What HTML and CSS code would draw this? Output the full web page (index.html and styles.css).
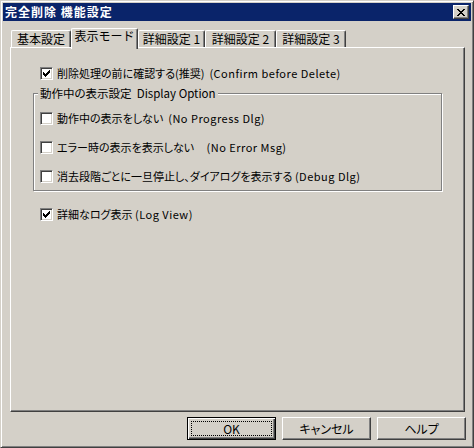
FILE: index.html
```html
<!DOCTYPE html>
<html lang="ja">
<head>
<meta charset="utf-8">
<title>完全削除 機能設定</title>
<link rel="stylesheet" href="styles.css">
</head>
<body>
<div class="window">
  <div class="titlebar">
    <span class="title">完全削除 機能設定</span>
    <span class="close"><svg width="8" height="7" viewBox="0 0 8 7" shape-rendering="crispEdges"><path d="M0 0h2v1h-2z M6 0h2v1h-2z M1 1h2v1h-2z M5 1h2v1h-2z M2 2h4v1h-4z M3 3h2v1h-2z M2 4h4v1h-4z M1 5h2v1h-2z M5 5h2v1h-2z M0 6h2v1h-2z M6 6h2v1h-2z" fill="#000"/></svg></span>
  </div>
  <div class="tabs">
    <div class="tab t1">基本設定</div>
    <div class="tab t2 selected">表示モード</div>
    <div class="tab t3">詳細設定 1</div>
    <div class="tab t4">詳細設定 2</div>
    <div class="tab t5">詳細設定 3</div>
  </div>
  <div class="panel">
    <div class="row first">
      <span class="cb checked"><svg width="7" height="7" viewBox="0 0 7 7" shape-rendering="crispEdges"><path d="M0 2h1v3h-1z M1 3h1v3h-1z M2 4h1v3h-1z M3 3h1v3h-1z M4 2h1v3h-1z M5 1h1v3h-1z M6 0h1v3h-1z" fill="#000"/></svg></span>
      <span class="label">削除処理の前に確認する(推奨)&nbsp;&nbsp;<span class="en">(Confirm before Delete)</span></span>
    </div>
    <div class="group">
      <div class="group-label">動作中の表示設定&nbsp;&nbsp;Display Option</div>
      <div class="row g1">
        <span class="cb"></span>
        <span class="label">動作中の表示をしない&nbsp;&nbsp;<span class="en">(No Progress Dlg)</span></span>
      </div>
      <div class="row g2">
        <span class="cb"></span>
        <span class="label">エラー時の表示を表示しない&nbsp;&nbsp;&nbsp;&nbsp;&nbsp;<span class="en">(No Error Msg)</span></span>
      </div>
      <div class="row g2">
        <span class="cb"></span>
        <span class="label">消去段階ごとに一旦停止し、ダイアログを表示する <span class="en">(Debug Dlg)</span></span>
      </div>
    </div>
    <div class="row last">
      <span class="cb checked"><svg width="7" height="7" viewBox="0 0 7 7" shape-rendering="crispEdges"><path d="M0 2h1v3h-1z M1 3h1v3h-1z M2 4h1v3h-1z M3 3h1v3h-1z M4 2h1v3h-1z M5 1h1v3h-1z M6 0h1v3h-1z" fill="#000"/></svg></span>
      <span class="label">詳細なログ表示 <span class="en">(Log View)</span></span>
    </div>
  </div>
  <div class="buttons">
    <div class="btn default"><span class="focus">OK</span></div>
    <div class="btn">キャンセル</div>
    <div class="btn">ヘルプ</div>
  </div>
</div>
</body>
</html>
```
FILE: styles.css
```css
* { box-sizing: border-box; }
html, body { margin: 0; padding: 0; }
body {
  width: 474px;
  height: 448px;
  background: #d4d0c8;
  font-family: "Noto Sans CJK JP", "Noto Sans", sans-serif;
  font-size: 12px;
  font-feature-settings: "palt";
  color: #000;
  overflow: hidden;
}
.window {
  width: 474px;
  height: 448px;
  background: #d4d0c8;
  border: 1px solid;
  border-color: #d4d0c8 #404040 #404040 #d4d0c8;
  box-shadow: inset 1px 1px #fff, inset -1px -1px #808080;
  padding: 2px;
  display: flex;
  flex-direction: column;
}
.titlebar {
  height: 18px;
  flex: none;
  background: #0a246a;
  color: #fff;
  display: flex;
  align-items: center;
  justify-content: space-between;
  padding: 0 2px 0 2px;
}
.title {
  font-weight: bold;
  font-size: 12px;
  line-height: 18px;
  letter-spacing: 1px;
  font-feature-settings: normal;
}
.close {
  width: 16px;
  height: 14px;
  background: #d4d0c8;
  border: 1px solid;
  border-color: #fff #404040 #404040 #fff;
  box-shadow: inset -1px -1px #808080;
  display: flex;
  align-items: center;
  justify-content: center;
  padding-right: 1px;
}
.close svg { display: block; }
.tabs {
  margin-top: 7px;
  height: 19px;
  flex: none;
  display: flex;
  align-items: flex-end;
  padding-left: 8px;
}
.tab {
  height: 17px;
  border-top: 1px solid #fff;
  border-left: 1px solid #fff;
  border-right: 1px solid #404040;
  box-shadow: inset -1px 0 #808080;
  border-radius: 2px 2px 0 0;
  text-align: center;
  line-height: 15px;
  font-size: 12px;
  white-space: nowrap;
  font-feature-settings: normal;
}
.tab.selected {
  height: 21px;
  margin-bottom: -2px;
  position: relative;
  z-index: 1;
  background: #d4d0c8;
  line-height: 14px;
}
.t1 { width: 60px; }
.t2 { width: 67px; }
.t3 { width: 67px; }
.t4 { width: 71px; }
.t5 { width: 70px; }
.panel {
  margin-left: 7px;
  width: 455px;
  height: 365px;
  flex: none;
  border: 1px solid;
  border-color: #fff #404040 #404040 #fff;
  box-shadow: inset -1px -1px #808080;
  padding-top: 19px;
  display: flex;
  flex-direction: column;
  align-items: flex-start;
}
.row {
  display: flex;
  align-items: center;
  height: 13px;
  gap: 4px;
  white-space: nowrap;
}
.panel > .row { margin-left: 29px; }
.row.last { margin-top: 17px; }
.label { line-height: 13px; font-size: 11px; }
.en { letter-spacing: 0.5px; }
.cb {
  width: 13px;
  height: 13px;
  flex: none;
  background: #fff;
  border: 1px solid;
  border-color: #808080 #fff #fff #808080;
  box-shadow: inset 1px 1px #404040, inset -1px -1px #d4d0c8;
  display: flex;
  align-items: flex-start;
  justify-content: flex-start;
  padding: 2px 0 0 2px;
}
.cb svg { display: block; }
.group {
  margin-top: 13px;
  margin-left: 22px;
  width: 409px;
  border: 1px solid #808080;
  box-shadow: inset 1px 1px #fff, 1px 1px #fff;
  padding: 0 0 7px 6px;
}
.group-label {
  width: fit-content;
  margin: -7px 0 0 -2px;
  padding: 0 2px;
  background: #d4d0c8;
  line-height: 13px;
  font-size: 11.5px;
  white-space: nowrap;
}
.row.g1 { margin-top: 12px; }
.row.g2 { margin-top: 16px; }
.buttons {
  margin-top: 5px;
  display: flex;
  justify-content: flex-end;
  gap: 6px;
  padding-right: 5px;
}
.btn {
  width: 89px;
  height: 23px;
  border: 1px solid;
  border-color: #fff #404040 #404040 #fff;
  box-shadow: inset -1px -1px #808080;
  display: flex;
  align-items: center;
  justify-content: center;
  font-size: 12px;
  line-height: 13px;
}
.btn.default {
  border: 1px solid #000;
  box-shadow: inset 1px 1px #fff, inset -1px -1px #404040, inset -2px -2px #808080;
  padding: 3px;
  align-items: stretch;
  justify-content: stretch;
}
.focus {
  flex: 1;
  border: 1px dotted #000;
  display: flex;
  align-items: center;
  justify-content: center;
}
```
